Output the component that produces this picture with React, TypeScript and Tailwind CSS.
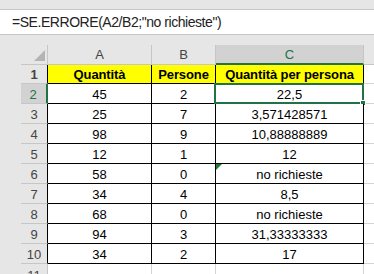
import type { ReactNode } from "react";

const data: [string, string, string][] = [
  ["45", "2", "22,5"],
  ["25", "7", "3,571428571"],
  ["98", "9", "10,88888889"],
  ["12", "1", "12"],
  ["58", "0", "no richieste"],
  ["34", "4", "8,5"],
  ["68", "0", "no richieste"],
  ["94", "3", "31,33333333"],
  ["34", "2", "17"],
];

const cell = "flex items-end justify-center leading-[13px] pb-[2px] border-r border-b border-black";

function RowHead({ n, active }: { n: number; active?: boolean }) {
  return (
    <div
      className={
        active
          ? "flex w-[27px] items-end justify-center border-b border-r-2 border-b-[#c6c6c6] border-r-[#217346] bg-[#d2d2d2] pb-[2px] pr-[1px] leading-[13px] text-[#217346]"
          : "flex w-[27px] items-end justify-center border-b border-r border-b-[#c6c6c6] border-r-black bg-[#e6e6e6] pb-[2px] leading-[13px] text-[#444]"
      }
    >
      {n}
    </div>
  );
}

function Row({ n, cells, h = "h-[20px]", extra }: { n: number; cells: [string, string, string]; h?: string; extra?: ReactNode }) {
  return (
    <div className={`flex ${h}`}>
      <RowHead n={n} active={n === 2} />
      <div className={`${cell} w-[104px] bg-white`}>{cells[0]}</div>
      <div className={`${cell} w-[64px] bg-white`}>{cells[1]}</div>
      <div className={`${cell} relative w-[148px] bg-white`}>
        {cells[2]}
        {extra}
      </div>
      <div className="flex-1 border-b border-[#d4d4d4] bg-white" />
    </div>
  );
}

export default function App() {
  return (
    <div className="h-[274px] w-[374px] overflow-hidden bg-[#e6e6e6] font-['Liberation_Sans',Arial,sans-serif] text-[13px] text-black">
      <div className="pt-[9px]">
        <div className="flex h-[26px] items-center border-y border-[#c6c6c6] bg-white pl-[12px] text-[14px] tracking-[-0.45px] text-[#222]">
          =SE.ERRORE(A2/B2;"no richieste")
        </div>
      </div>

      <div className="mt-[10px] pl-[21px]">
        {/* column headers */}
        <div className="flex h-[20px] text-[#444]">
          <div className="relative w-[27px] border-b border-r border-[#c6c6c6]">
            <svg className="absolute bottom-[3px] right-[2px]" width="11" height="11" viewBox="0 0 11 11">
              <path d="M11 0 V11 H0 Z" fill="#b4b4b4" />
            </svg>
          </div>
          <div className="flex w-[104px] items-center justify-center border-b border-r border-[#c6c6c6] leading-[13px]">A</div>
          <div className="flex w-[64px] items-center justify-center border-b border-r border-[#c6c6c6] leading-[13px]">B</div>
          <div className="flex w-[148px] items-center justify-center border-b-2 border-r border-b-[#217346] border-r-[#c6c6c6] bg-[#d2d2d2] leading-[13px] text-[#217346]">
            C
          </div>
          <div className="flex-1 border-b border-[#c6c6c6]" />
        </div>

        {/* row 1 */}
        <div className="flex h-[19px] font-bold tracking-[-0.1px]">
          <RowHead n={1} />
          <div className={`${cell} w-[104px] bg-[#ffff00]`}>Quantità</div>
          <div className={`${cell} w-[64px] bg-[#ffff00]`}>Persone</div>
          <div className={`${cell} w-[148px] bg-[#ffff00]`}>Quantità per persona</div>
          <div className="flex-1 border-b border-[#d4d4d4] bg-white" />
        </div>

        {data.map((r, i) => {
          const n = i + 2;
          let extra: ReactNode = null;
          if (n === 2) {
            extra = (
              <>
                <div className="absolute -bottom-[1px] -left-[2px] -right-[1px] -top-[1px] border-2 border-[#217346]" />
                <div className="absolute -bottom-[3px] -right-[3px] h-[6px] w-[6px] border border-white bg-[#217346]" />
              </>
            );
          }
          if (n === 6) {
            extra = (
              <svg className="absolute left-0 top-0" width="6" height="6" viewBox="0 0 6 6">
                <path d="M0 0 H6 L0 6 Z" fill="#1e7b34" />
              </svg>
            );
          }
          return <Row key={n} n={n} cells={r} extra={extra} />;
        })}

        {/* row 11 */}
        <div className="flex h-[20px]">
          <div className="flex w-[27px] items-end justify-center border-r border-[#c6c6c6] pb-[2px] leading-[13px] text-[#444]">11</div>
          <div className="w-[104px] border-r border-[#d4d4d4] bg-white" />
          <div className="w-[64px] border-r border-[#d4d4d4] bg-white" />
          <div className="w-[148px] border-r border-[#d4d4d4] bg-white" />
          <div className="flex-1 bg-white" />
        </div>
      </div>
    </div>
  );
}
